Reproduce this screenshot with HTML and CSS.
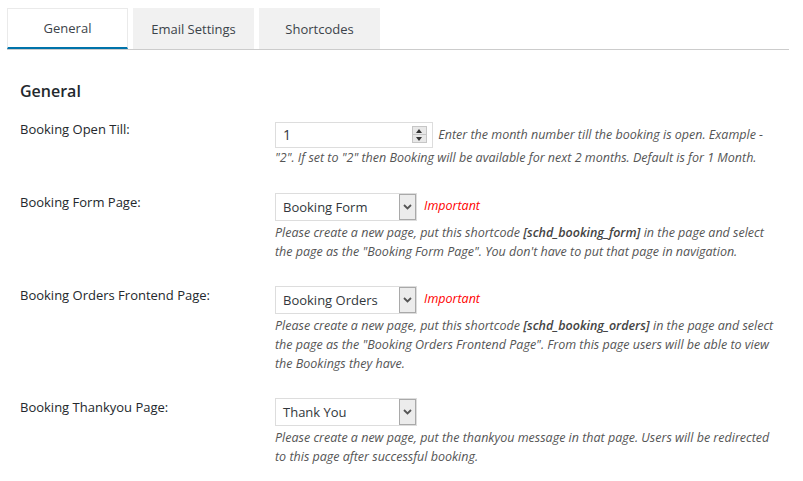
FILE: index.html
```html
<!DOCTYPE html>
<html>
<head>
<meta charset="utf-8">
<link rel="stylesheet" href="styles.css">
</head>
<body>
<div class="wrap">
  <nav class="tabs">
    <a class="tab active">General</a>
    <a class="tab">Email Settings</a>
    <a class="tab">Shortcodes</a>
  </nav>
  <section class="panel">
    <h2 class="title">General</h2>

    <div class="row row-first">
      <div class="label">Booking Open Till:</div>
      <div class="field">
        <span class="num">1<span class="spin"><span class="up"></span><span class="down"></span></span></span>
        <span class="desc">Enter the month number till the booking is open. Example - "2". If set to "2" then Booking will be available for next 2 months. Default is for 1 Month.</span>
      </div>
    </div>

    <div class="row">
      <div class="label">Booking Form Page:</div>
      <div class="field">
        <div class="line">
          <span class="select">Booking Form<span class="arrow"><svg width="9" height="6" viewBox="0 0 9 6"><path d="M1 1 L4.5 4.5 L8 1" fill="none" stroke="#555" stroke-width="1.8"/></svg></span></span>
          <span class="imp">Important</span>
        </div>
        <p class="desc block">Please create a new page, put this shortcode <b>[schd_booking_form]</b> in the page and select the page as the "Booking Form Page". You don't have to put that page in navigation.</p>
      </div>
    </div>

    <div class="row">
      <div class="label">Booking Orders Frontend Page:</div>
      <div class="field">
        <div class="line">
          <span class="select">Booking Orders<span class="arrow"><svg width="9" height="6" viewBox="0 0 9 6"><path d="M1 1 L4.5 4.5 L8 1" fill="none" stroke="#555" stroke-width="1.8"/></svg></span></span>
          <span class="imp">Important</span>
        </div>
        <p class="desc block">Please create a new page, put this shortcode <b>[schd_booking_orders]</b> in the page and select the page as the "Booking Orders Frontend Page". From this page users will be able to view the Bookings they have.</p>
      </div>
    </div>

    <div class="row">
      <div class="label">Booking Thankyou Page:</div>
      <div class="field">
        <div class="line">
          <span class="select">Thank You<span class="arrow"><svg width="9" height="6" viewBox="0 0 9 6"><path d="M1 1 L4.5 4.5 L8 1" fill="none" stroke="#555" stroke-width="1.8"/></svg></span></span>
        </div>
        <p class="desc block">Please create a new page, put the thankyou message in that page. Users will be redirected to this page after successful booking.</p>
      </div>
    </div>
  </section>
</div>
</body>
</html>
```

FILE: styles.css
```css
* { box-sizing: border-box; }
body {
  margin: 0;
  background: #fff;
  font-family: "Open Sans", "Noto Sans", sans-serif;
  color: #23282d;
}
.tabs {
  display: flex;
  gap: 5px;
  margin: 8px 14px 0 7px;
  border-bottom: 1px solid #ccc;
}
.tab {
  width: 121px;
  height: 41px;
  display: flex;
  align-items: center;
  justify-content: center;
  background: #f1f1f1;
  font-size: 13px;
  color: #3c434a;
}
.tab.active {
  background: #fff;
  border: 1px solid #eaeaea;
  border-bottom: 2px solid #0073aa;
}
.panel {
  padding: 0 22px 0 20px;
}
.title {
  margin: 31px 0 0;
  font-size: 16px;
  line-height: 20px;
  font-weight: 600;
  color: #23282d;
}
.row {
  display: grid;
  grid-template-columns: 255px 1fr;
  padding-top: 25px;
}
.row-first { padding-top: 21px; }
.label {
  font-size: 13px;
  line-height: 18px;
  color: #23282d;
}
.row-first .label { margin-top: -2px; }
.field {
  font-size: 12.5px;
}
.num {
  display: inline-block;
  vertical-align: middle;
  position: relative;
  width: 158px;
  height: 26px;
  border: 1px solid #ddd;
  font-size: 14px;
  line-height: 24px;
  padding-left: 7px;
  color: #32373c;
}
.spin {
  position: absolute;
  right: 5px;
  top: 3px;
  width: 15px;
  height: 17px;
  display: flex;
  flex-direction: column;
  border: 1px solid #c6c6c6;
  background: #e8e8e8;
}
.spin span {
  flex: 1;
  position: relative;
}
.spin .up { border-bottom: 1px solid #c6c6c6; }
.spin .up::after, .spin .down::after {
  content: "";
  position: absolute;
  left: 3px;
  border-left: 3.5px solid transparent;
  border-right: 3.5px solid transparent;
}
.spin .up::after { top: 2px; border-bottom: 4px solid #333; }
.spin .down::after { top: 2px; border-top: 4px solid #333; }
.desc {
  font-style: italic;
  font-size: 12.5px;
  line-height: 20px;
  color: #555;
  margin-left: 2px;
  vertical-align: middle;
}
.desc.block {
  display: block;
  margin: 2px 0 0;
  line-height: 19px;
}
.desc b { font-weight: 600; color: #444; }
.line {
  display: flex;
  align-items: center;
  gap: 7px;
}
.select {
  position: relative;
  width: 142px;
  height: 28px;
  border: 1px solid #ddd;
  font-size: 13px;
  line-height: 26px;
  padding-left: 7px;
  color: #32373c;
}
.arrow {
  position: absolute;
  right: 0;
  top: 0;
  bottom: 0;
  width: 17px;
  background: #ececec;
  border: 1px solid #a9a9a9;
  display: flex;
  align-items: center;
  justify-content: center;
}
.imp {
  font-style: italic;
  font-size: 12.5px;
  color: #f00;
  margin-top: -3px;
}
```
